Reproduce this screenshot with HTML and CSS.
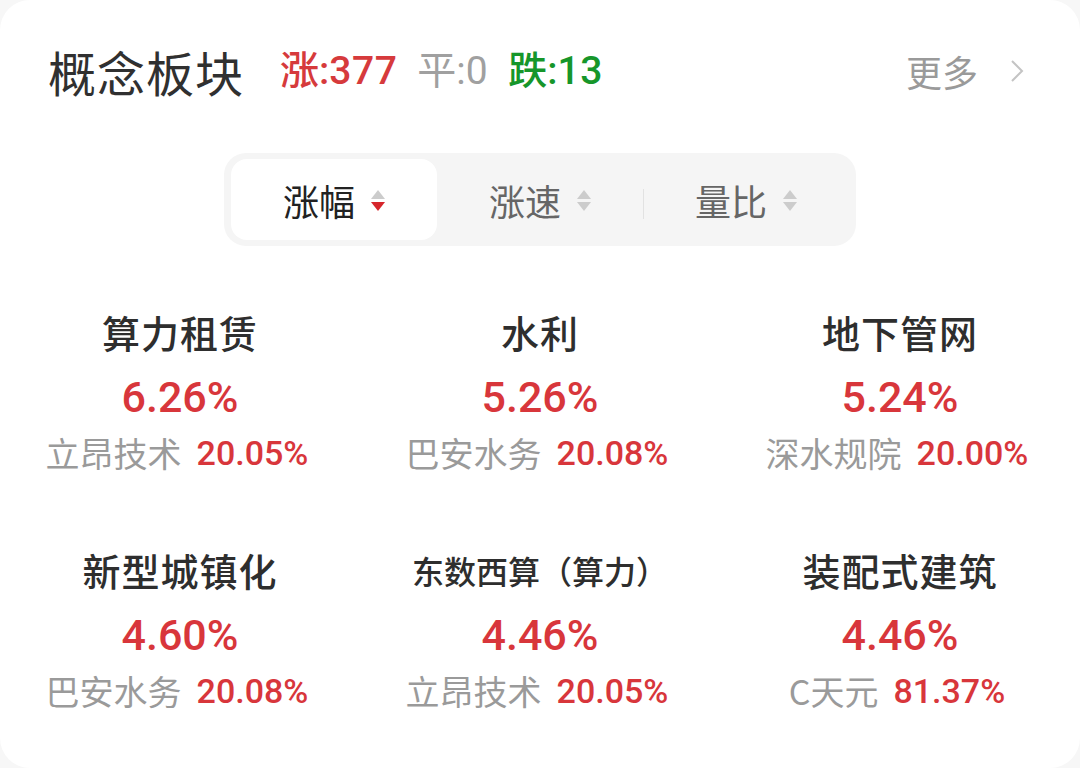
FILE: index.html
```html
<!DOCTYPE html>
<html lang="zh-CN">
<head>
<meta charset="utf-8">
<title>概念板块</title>
<link rel="stylesheet" href="styles.css">
</head>
<body>
<div class="card">
  <div class="header">
    <div class="title">概念板块</div>
    <div class="stats">
      <span class="stat up">涨:<b>377</b></span>
      <span class="stat flat">平:<b>0</b></span>
      <span class="stat down">跌:<b>13</b></span>
    </div>
    <div class="more">更多
      <svg class="chev" width="14" height="24" viewBox="0 0 14 24"><polyline points="2,2 12,12 2,22" fill="none" stroke="#c4c4c4" stroke-width="2"/></svg>
    </div>
  </div>

  <div class="tabs-wrap">
    <div class="tabs">
      <div class="tab active">涨幅<span class="sort"><i class="tri-up"></i><i class="tri-down red"></i></span></div>
      <div class="tab">涨速<span class="sort"><i class="tri-up"></i><i class="tri-down"></i></span></div>
      <div class="tab sep">量比<span class="sort"><i class="tri-up"></i><i class="tri-down"></i></span></div>
    </div>
  </div>

  <div class="grid">
    <div class="cell">
      <div class="name">算力租赁</div>
      <div class="pct">6.26%</div>
      <div class="sub"><span class="stock">立昂技术</span><span class="spct">20.05%</span></div>
    </div>
    <div class="cell">
      <div class="name">水利</div>
      <div class="pct">5.26%</div>
      <div class="sub"><span class="stock">巴安水务</span><span class="spct">20.08%</span></div>
    </div>
    <div class="cell">
      <div class="name">地下管网</div>
      <div class="pct">5.24%</div>
      <div class="sub"><span class="stock">深水规院</span><span class="spct">20.00%</span></div>
    </div>
    <div class="cell">
      <div class="name">新型城镇化</div>
      <div class="pct">4.60%</div>
      <div class="sub"><span class="stock">巴安水务</span><span class="spct">20.08%</span></div>
    </div>
    <div class="cell">
      <div class="name small">东数西算（算力）</div>
      <div class="pct">4.46%</div>
      <div class="sub"><span class="stock">立昂技术</span><span class="spct">20.05%</span></div>
    </div>
    <div class="cell">
      <div class="name">装配式建筑</div>
      <div class="pct">4.46%</div>
      <div class="sub"><span class="stock">C天元</span><span class="spct">81.37%</span></div>
    </div>
  </div>
</div>
</body>
</html>
```

FILE: styles.css
```css
* { box-sizing: border-box; }
html, body {
  margin: 0;
  padding: 0;
  background: #f7f7f7;
}
body {
  font-family: Roboto, "Noto Sans CJK SC", "Noto Sans", sans-serif;
  width: 1080px;
  height: 768px;
  overflow: hidden;
}
.card {
  width: 1080px;
  height: 768px;
  padding-top: 40px;
  background: #ffffff;
  border-radius: 30px;
}
.header {
  display: flex;
  align-items: center;
  height: 62px;
  padding: 0 56px 0 48px;
}
.title {
  font-family: "Noto Sans CJK SC", sans-serif;
  font-size: 48px;
  color: #303030;
  line-height: 62px;
  letter-spacing: 1px;
}
.stats {
  display: flex;
  align-items: center;
  margin-left: 36px;
  gap: 20px;
  flex: 1;
}
.stat {
  font-family: Roboto, "Noto Sans CJK SC", sans-serif;
  font-size: 39px;
  line-height: 62px;
  font-weight: 500;
}
.stat b { font-weight: 500; letter-spacing: 0.5px; }
.stat.up { color: #d63a3c; }
.stat.flat { color: #a0a0a0; font-weight: 400; }
.stat.flat b { font-weight: 400; }
.stat.down { color: #16962a; }
.more {
  display: flex;
  align-items: center;
  font-family: "Noto Sans CJK SC", sans-serif;
  font-size: 36px;
  color: #9a9a9a;
  gap: 32px;
}
.chev { display: block; }

.tabs-wrap {
  display: flex;
  justify-content: center;
  margin-top: 51px;
}
.tabs {
  display: flex;
  width: 632px;
  height: 93px;
  padding: 6px 7px;
  background: #f5f5f5;
  border-radius: 22px;
}
.tab {
  position: relative;
  flex: 1;
  display: flex;
  align-items: center;
  justify-content: center;
  gap: 16px;
  font-family: "Noto Sans CJK SC", sans-serif;
  font-size: 36px;
  color: #666666;
  border-radius: 16px;
}
.tab.active {
  background: #ffffff;
  color: #222222;
}
.tab.sep::before {
  content: "";
  position: absolute;
  left: 0;
  top: 30px;
  width: 1px;
  height: 30px;
  background: #e2e2e2;
}
.sort {
  display: flex;
  flex-direction: column;
  gap: 3px;
  margin-top: 2px;
}
.sort i {
  display: block;
  width: 0;
  height: 0;
  border-left: 7px solid transparent;
  border-right: 7px solid transparent;
}
.tri-up { border-bottom: 9px solid #cccccc; }
.tri-down { border-top: 9px solid #cccccc; }
.tri-down.red { border-top-color: #d6262c; }

.grid {
  display: grid;
  grid-template-columns: repeat(3, 360px);
  row-gap: 72px;
  margin-top: 61px;
}
.cell {
  display: flex;
  flex-direction: column;
  align-items: center;
}
.name {
  font-family: "Noto Sans CJK SC", sans-serif;
  font-size: 38px;
  font-weight: 500;
  color: #2e2e2e;
  height: 50px;
  line-height: 50px;
  letter-spacing: 1px;
}
.name.small {
  font-size: 32px;
  letter-spacing: 0;
}
.pct {
  margin-top: 15px;
  height: 50px;
  line-height: 50px;
  font-family: Roboto, sans-serif;
  font-size: 43px;
  font-weight: 500;
  color: #d8363b;
}
.sub {
  margin-top: 11px;
  height: 40px;
  display: flex;
  align-items: center;
  gap: 15px;
  padding-right: 6px;
}
.stock {
  font-family: "Noto Sans CJK SC", Roboto, sans-serif;
  font-size: 34px;
  color: #9a9a9a;
  line-height: 40px;
}
.spct {
  font-family: Roboto, sans-serif;
  font-size: 34px;
  font-weight: 500;
  color: #d8363b;
  line-height: 40px;
}
```
